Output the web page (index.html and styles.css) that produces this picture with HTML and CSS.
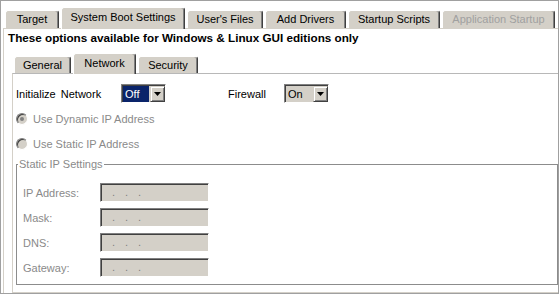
FILE: index.html
```html
<!DOCTYPE html>
<html>
	<head>
		<meta charset="UTF-8">
		<title>System Boot Settings</title>
		<link rel="stylesheet" href="styles.css">
	</head>
	<body>
		<div class="window">
			<div class="tabs">
				<div class="tab t-target">Target</div>
				<div class="tab t-boot active">System Boot Settings</div>
				<div class="tab t-files">User's Files</div>
				<div class="tab t-drivers">Add Drivers</div>
				<div class="tab t-scripts">Startup Scripts</div>
				<div class="tab t-apps disabled">Application Startup</div>
			</div>
			<div class="panel">
				<p class="notice">These options available for Windows &amp; Linux GUI editions only</p>
				<div class="tabs sub">
					<div class="tab t-general">General</div>
					<div class="tab t-network active">Network</div>
					<div class="tab t-security">Security</div>
				</div>
				<div class="subpanel">
					<div class="init-row">
						<span class="init-label">Initialize <span class="word">Network</span></span>
						<div class="combo focus">
							<span class="combo-value">Off</span>
							<span class="combo-btn"><svg width="7" height="4" viewBox="0 0 7 4"><polygon points="0,0 7,0 3.5,4" fill="#000"/></svg></span>
						</div>
						<span class="fw-label">Firewall</span>
						<div class="combo">
							<span class="combo-value">On</span>
							<span class="combo-btn"><svg width="7" height="4" viewBox="0 0 7 4"><polygon points="0,0 7,0 3.5,4" fill="#000"/></svg></span>
						</div>
					</div>
					<div class="radios">
						<div class="radio-row"><span class="radio checked"></span>Use Dynamic IP Address</div>
						<div class="radio-row"><span class="radio"></span>Use Static IP Address</div>
					</div>
					<fieldset class="group">
						<legend>Static IP Settings</legend>
						<div class="field-row"><span class="field-label">IP Address:</span><div class="ip-input"><span>.</span><span>.</span><span>.</span></div></div>
						<div class="field-row"><span class="field-label">Mask:</span><div class="ip-input"><span>.</span><span>.</span><span>.</span></div></div>
						<div class="field-row"><span class="field-label">DNS:</span><div class="ip-input"><span>.</span><span>.</span><span>.</span></div></div>
						<div class="field-row"><span class="field-label">Gateway:</span><div class="ip-input"><span>.</span><span>.</span><span>.</span></div></div>
					</fieldset>
				</div>
			</div>
		</div>
	</body>
</html>
```

FILE: styles.css
```css
body{
	margin: 0;
	background: #fff;
	font-family: "Liberation Sans", Arial, sans-serif;
	font-size: 11px;
	color: #000;
}
.window{
	width: 559px;
	height: 294px;
	box-sizing: border-box;
	border: 1px solid #a0a0a0;
	padding-left: 2px;
	display: flex;
	flex-direction: column;
}
.tabs{
	display: flex;
	align-items: flex-end;
	gap: 2px;
	padding: 6px 0 0 2px;
}
.tab{
	height: 18px;
	box-sizing: border-box;
	text-align: center;
	line-height: 16px;
	background: #d4d0c8;
	border: 1px solid #fff;
	border-bottom: 0;
	border-right-color: #404040;
	box-shadow: inset -1px 0 #808080;
	border-radius: 3px 3px 0 0;
	white-space: nowrap;
}
.tab.active{
	height: 22px;
	line-height: 18px;
	margin-bottom: -1px;
	position: relative;
	z-index: 1;
}
.tab.disabled{
	color: #a0a0a0;
}
.t-target{ width: 54px; }
.t-boot{ width: 124px; }
.t-files{ width: 76px; }
.t-drivers{ width: 81px; }
.t-scripts{ width: 92px; }
.t-apps{ width: 113px; }
.t-general{ width: 57px; }
.t-network{ width: 63px; }
.t-security{ width: 60px; }
.panel{
	flex: 1;
	display: flex;
	flex-direction: column;
	border-top: 1px solid #d4d0c8;
	border-left: 1px solid #d4d0c8;
	padding-left: 4px;
}
.notice{
	margin: 2px 0 0;
	font-weight: bold;
	font-size: 11.7px;
	line-height: 13px;
}
.tabs.sub{
	padding: 9px 0 0 6px;
}
.tabs.sub .tab{
	height: 17px;
}
.tabs.sub .tab.active{
	height: 21px;
}
.subpanel{
	flex: 1;
	display: flex;
	flex-direction: column;
	margin-left: 4px;
	border-top: 1px solid #b8b8b8;
	border-left: 1px solid #d4d0c8;
	border-bottom: 1px solid #d4d0c8;
	padding: 10px 0 0 3px;
}
.init-row{
	display: flex;
	align-items: center;
	height: 19px;
}
.init-label{
	width: 105px;
}
.init-label .word{
	margin-left: 2px;
}
.fw-label{
	width: 56px;
	margin-left: 62px;
}
.combo{
	display: flex;
	gap: 1px;
	width: 45px;
	height: 19px;
	box-sizing: border-box;
	border: 1px solid;
	border-color: #808080 #fff #fff #808080;
	box-shadow: inset 1px 1px #404040;
	padding: 1px 0 0 1px;
	background: #d4d0c8;
}
.combo-value{
	width: 26px;
	padding-left: 2px;
	box-sizing: border-box;
	line-height: 16px;
	color: #000;
}
.combo.focus .combo-value{
	background: #0a246a;
	color: #fff;
}
.combo-btn{
	width: 15px;
	height: 16px;
	box-sizing: border-box;
	background: #d4d0c8;
	border: 1px solid;
	border-color: #d4d0c8 #404040 #404040 #d4d0c8;
	box-shadow: inset 1px 1px #fff, inset -1px -1px #808080;
	display: flex;
	align-items: center;
	justify-content: center;
}
.radios{
	margin-top: 3px;
}
.radio-row{
	display: flex;
	align-items: center;
	gap: 5px;
	height: 25px;
	color: #8a8a8a;
}
.radio{
	width: 12px;
	height: 12px;
	box-sizing: border-box;
	border-radius: 50%;
	border: 1px solid;
	border-color: #808080 #fff #fff #808080;
	box-shadow: inset 1px 1px #404040;
	background: #d4d0c8;
	display: flex;
	align-items: center;
	justify-content: center;
}
.radio.checked::after{
	content: "";
	width: 4px;
	height: 4px;
	border-radius: 50%;
	background: #808080;
}
.group{
	margin: 2px 0 0;
	padding: 12px 0 7px 0;
	border: 1px solid #8c8c8c;
	display: flex;
	flex-direction: column;
	gap: 6px;
	min-width: 0;
}
.group legend{
	margin-left: 1px;
	padding: 0 1px;
	line-height: 13px;
	color: #8a8a8a;
}
.field-row{
	display: flex;
	align-items: center;
	height: 19px;
	padding-left: 6px;
}
.field-label{
	width: 77px;
	color: #8a8a8a;
}
.ip-input{
	display: flex;
	width: 109px;
	height: 19px;
	box-sizing: border-box;
	border: 1px solid;
	border-color: #808080 #fff #fff #808080;
	box-shadow: inset 1px 1px #404040;
	background: #d4d0c8;
	padding-left: 1px;
	line-height: 16px;
	color: #808080;
}
.ip-input span{
	width: 13px;
	text-align: right;
}
```
